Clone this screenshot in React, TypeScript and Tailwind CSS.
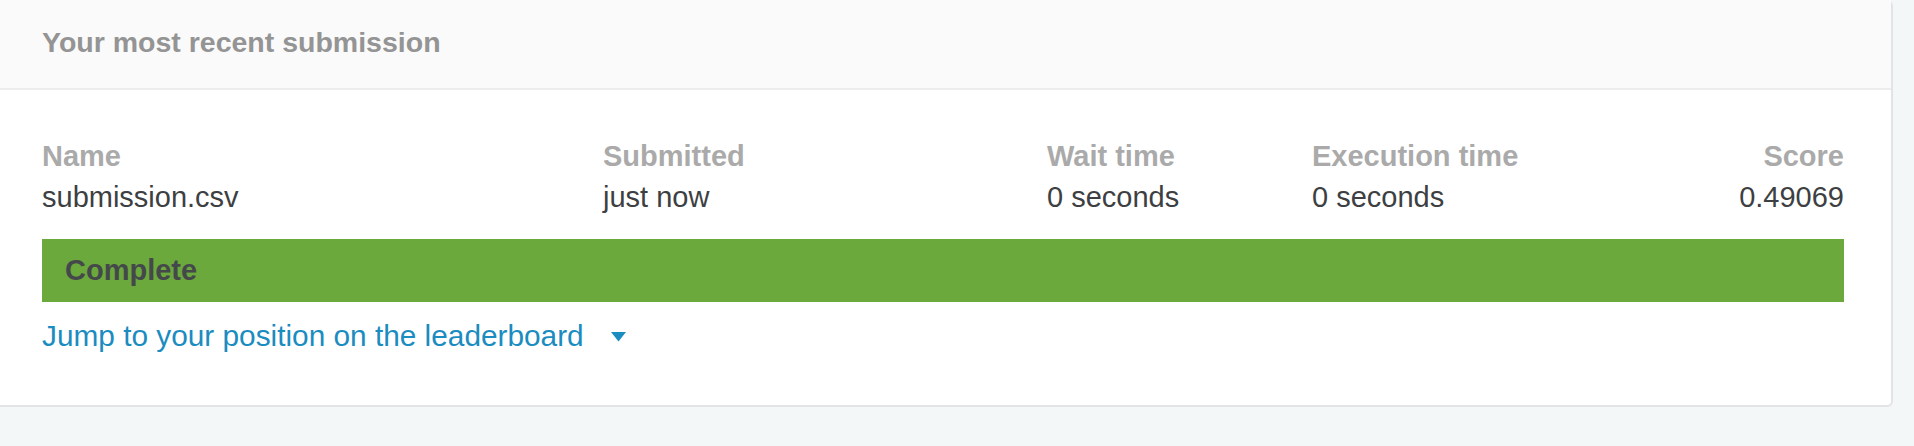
import React from 'react';

const columns = [
  { label: 'Name', value: 'submission.csv', width: 'w-[561px]' },
  { label: 'Submitted', value: 'just now', width: 'w-[444px]' },
  { label: 'Wait time', value: '0 seconds', width: 'w-[265px]' },
  { label: 'Execution time', value: '0 seconds', width: 'w-[300px]' },
];

const App: React.FC = () => {
  return (
    <div className="h-[446px] w-full overflow-hidden bg-[#f4f7f8] pr-[21px] font-['Liberation_Sans',Arial,sans-serif]">
      <div className="rounded-r-md border-2 border-l-0 border-t-0 border-[#e1e3e5] bg-white">
        {/* header */}
        <div className="border-b-2 border-[#ececec] bg-[#fafafa] pb-[26px] pl-[42px] pt-[22px]">
          <h2 className="text-[28.5px] font-bold leading-[40px] text-[#949494]">Your most recent submission</h2>
        </div>

        {/* body */}
        <div className="pb-[49px] pl-[42px] pr-[47px] pt-[46px]">
          <div className="flex text-[29px] leading-[41px]">
            {columns.map((col) => (
              <div key={col.label} className={`${col.width} shrink-0`}>
                <div className="font-bold text-[#aaaaaa]">{col.label}</div>
                <div className="text-[#3d3f42]">{col.value}</div>
              </div>
            ))}
            <div className="flex-1 text-right">
              <div className="font-bold text-[#aaaaaa]">Score</div>
              <div className="text-[#3d3f42]">0.49069</div>
            </div>
          </div>

          <div className="mt-[21px] flex h-[63px] items-center bg-[#6ba93c] pl-[23px]">
            <span className="text-[29px] font-bold text-[#45484b]">Complete</span>
          </div>

          <a href="#" className="mt-[13px] inline-flex items-center gap-[27px] text-[29.8px] leading-[41px] text-[#1b8cc0]">
            Jump to your position on the leaderboard
            <svg width="15" height="10" viewBox="0 0 15 10" className="mt-[2px]">
              <path d="M0 0h15L7.5 9.5z" fill="currentColor" />
            </svg>
          </a>
        </div>
      </div>
    </div>
  );
};

export default App;
